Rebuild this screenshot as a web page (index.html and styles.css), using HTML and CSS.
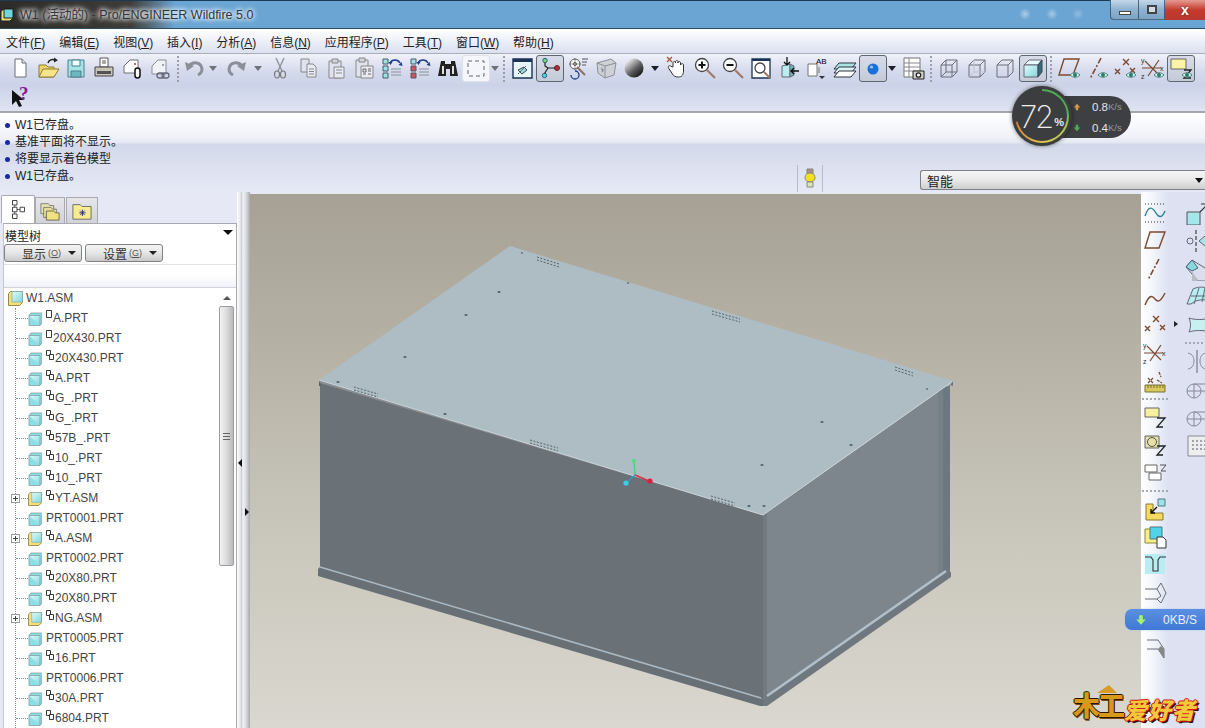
FILE: index.html
```html
<!DOCTYPE html>
<html lang="zh-CN">
<head>
<meta charset="utf-8">
<title>W1 (活动的) - Pro/ENGINEER Wildfire 5.0</title>
<link rel="stylesheet" href="styles.css">
</head>
<body>
<svg class="defs" width="0" height="0" aria-hidden="true">
  <defs>
    <linearGradient id="g-sphere" x1="0.2" y1="0.1" x2="0.9" y2="0.9"><stop offset="0" stop-color="#e8e8e8"/><stop offset="0.55" stop-color="#5c5c5c"/><stop offset="1" stop-color="#111"/></linearGradient>
    <linearGradient id="g-cube" x1="0" y1="0" x2="1" y2="1"><stop offset="0" stop-color="#e4fbfb"/><stop offset="1" stop-color="#7fd6dc"/></linearGradient>
    <symbol id="i-new" viewBox="0 0 24 24"><path d="M7 3h7l4 4v14H7z" fill="#fff" stroke="#6a6f78"/><path d="M14 3v4h4" fill="#e8e8ef" stroke="#6a6f78"/></symbol>
    <symbol id="i-open" viewBox="0 0 24 24"><path d="M3 9h7l2 2h6v10H3z" fill="#f2d465" stroke="#8e7a34"/><path d="M3 21l4-8h16l-5 8z" fill="#f8e488" stroke="#8e7a34"/><path d="M12 7c1-3 4-4 7-3" fill="none" stroke="#222" stroke-width="1.6"/><path d="M18 1.500l4 2.700-4 2.300z" fill="#222"/></symbol>
    <symbol id="i-save" viewBox="0 0 24 24"><path d="M4 4h16v17H4z" fill="#a4e4e6" stroke="#4f7f8c"/><path d="M8 4h8v6H8z" fill="#eaffff" stroke="#4f7f8c"/><path d="M7 15h10v6H7z" fill="#6db8c0" stroke="#4f7f8c"/></symbol>
    <symbol id="i-print" viewBox="0 0 24 24"><path d="M8 2h8v9H8z" fill="#fff" stroke="#555"/><path d="M10 5h4M10 7h4" stroke="#555"/><path d="M3 11h18v9H3z" fill="#c9c6b8" stroke="#444"/><path d="M5 15h14v3H5z" fill="#555"/></symbol>
    <symbol id="i-mail" viewBox="0 0 24 24"><path d="M4 10l6-6h8v13H4z" fill="#fff" stroke="#6a6f78"/><circle cx="15" cy="8" r="1" fill="#c33"/><rect x="15" y="12" width="5" height="10" rx="2.500" fill="#fff" stroke="#111" stroke-width="1.500"/></symbol>
    <symbol id="i-mail2" viewBox="0 0 24 24"><path d="M4 10l6-6h8v14H4z" fill="#f0f2f8" stroke="#8a8f98"/><circle cx="15" cy="9" r="1" fill="#889"/><rect x="9" y="17" width="7" height="5" rx="2.500" fill="none" stroke="#667" stroke-width="1.300"/><rect x="14" y="17" width="7" height="5" rx="2.500" fill="none" stroke="#667" stroke-width="1.300"/></symbol>
    <symbol id="i-undo" viewBox="0 0 24 24"><path d="M7 10c4-5 12-4 13 3 0 3-2 5-4 6" fill="none" stroke="#8a8f98" stroke-width="3"/><path d="M3 6l2 9 7-5z" fill="#8a8f98"/></symbol>
    <symbol id="i-redo" viewBox="0 0 24 24"><path d="M17 10c-4-5-12-4-13 3 0 3 2 5 4 6" fill="none" stroke="#8a8f98" stroke-width="3"/><path d="M21 6l-2 9-7-5z" fill="#8a8f98"/></symbol>
    <symbol id="i-cut" viewBox="0 0 24 24"><path d="M8 2l6 13M16 2l-6 13" stroke="#8a8f98" stroke-width="1.300" fill="none"/><ellipse cx="9" cy="18.500" rx="2.500" ry="3.500" fill="none" stroke="#777" stroke-width="1.200"/><ellipse cx="15" cy="18.500" rx="2.500" ry="3.500" fill="none" stroke="#777" stroke-width="1.200"/></symbol>
    <symbol id="i-copy" viewBox="0 0 24 24"><path d="M5 3h8v13H5z" fill="#dfe3f0" stroke="#888"/><path d="M11 8h6l3 3v10h-9z" fill="#e8ebf5" stroke="#888"/><path d="M13 13h5M13 15.500h5M13 18h5" stroke="#888"/></symbol>
    <symbol id="i-paste" viewBox="0 0 24 24"><path d="M5 5h12v17H5z" fill="#dfe3f0" stroke="#888"/><path d="M8 3h6v4H8z" fill="#d4d4dc" stroke="#888"/><path d="M10 11h10v11H10z" fill="#e8ebf5" stroke="#888"/><path d="M12 14h6M12 17h6" stroke="#888"/></symbol>
    <symbol id="i-paste2" viewBox="0 0 24 24"><path d="M4 4h12v17H4z" fill="#dfe3f0" stroke="#888"/><path d="M7 2h6v4H7z" fill="#d4d4dc" stroke="#888"/><path d="M9 10h12v12H9z" fill="#e8ebf5" stroke="#888"/><path d="M11 13h3v3h-3zM16 13h3M16 15h3M11 18h3M16 18h3" stroke="#666" fill="none"/></symbol>
    <symbol id="i-regen" viewBox="0 0 24 24"><path d="M3 3h5v5H3zM3 10h5v5H3zM3 17h5v5H3z" fill="#9be4e6" stroke="#4a5a68"/><path d="M11 13h10M11 16h10M11 19h10" stroke="#8a8f98"/><path d="M10 7c2-4 8-4 10 0" fill="none" stroke="#1d3f8a" stroke-width="1.600"/><path d="M8.500 6l4 0-2 3zM21.500 6l-3 3 4 1z" fill="#1d3f8a"/></symbol>
    <symbol id="i-regen2" viewBox="0 0 24 24"><path d="M3 3h5v5H3z" fill="#9be4e6" stroke="#4a5a68"/><path d="M3 10h5v5H3zM3 17h5v5H3z" fill="#d8505a" stroke="#4a5a68"/><path d="M11 13h10M11 16h10M11 19h10" stroke="#8a8f98"/><path d="M10 7c2-4 8-4 10 0" fill="none" stroke="#1d3f8a" stroke-width="1.600"/><path d="M8.500 6l4 0-2 3zM21.500 6l-3 3 4 1z" fill="#1d3f8a"/></symbol>
    <symbol id="i-binoc" viewBox="0 0 24 24"><path d="M5 5h4v3h6V5h4l3 15h-8v-7h-4v7H2z" fill="#222"/><path d="M6 10h2v8H6zM16 10h2v8h-2z" fill="#ddd"/></symbol>
    <symbol id="i-marquee" viewBox="0 0 24 24"><path d="M4 5h16v15H4z" fill="none" stroke="#666" stroke-dasharray="4 3"/></symbol>
    <symbol id="i-view" viewBox="0 0 24 24"><path d="M3 3h19v19H3z" fill="#e8f6fa" stroke="#1b3355" stroke-width="1.400"/><path d="M3 3h19v3H3z" fill="#1b3355"/><path d="M8 14l6-3 3 3-5 4z" fill="#9ad9df" stroke="#444"/><path d="M8 18l8-8" stroke="#444" stroke-dasharray="2 1"/></symbol>
    <symbol id="i-datum" viewBox="0 0 24 24"><circle cx="7" cy="4.500" r="2.200" fill="#7cd28a" stroke="#267"/><circle cx="6.500" cy="19.500" r="2.200" fill="#58d4e0" stroke="#267"/><circle cx="19" cy="12" r="2.500" fill="#b02a3a" stroke="#722"/><path d="M7 7v3l3 2-3.500 5.500M10 12h7" fill="none" stroke="#222" stroke-width="1.200"/></symbol>
    <symbol id="i-spin" viewBox="0 0 24 24"><circle cx="9" cy="8" r="5" fill="#fff" stroke="#555"/><circle cx="9" cy="8" r="1.500" fill="none" stroke="#555"/><path d="M3 8h12M9 2v12" stroke="#555" stroke-width="0.600"/><path d="M16 3h6M16 6h5M16 9h4" stroke="#556"/><path d="M11 11l8 8" stroke="#8a7060" stroke-width="2"/><path d="M5 19a4 4 0 1 0 4-4" fill="none" stroke="#1d3f8a" stroke-width="1.300"/></symbol>
    <symbol id="i-orient" viewBox="0 0 24 24"><path d="M3 7l14-4 5 4-2 12-9 3-7-5z" fill="#cfd1d6" stroke="#8a8f98"/><path d="M3 7l8 3 0 12M11 10l11-3" fill="none" stroke="#8a8f98"/><path d="M7 11l3 3-2 3z" fill="#8a8f98"/></symbol>
    <symbol id="i-sphere" viewBox="0 0 24 24"><circle cx="12" cy="12" r="9.500" fill="url(#g-sphere)"/></symbol>
    <symbol id="i-hand" viewBox="0 0 24 24"><path d="M8 11V7c0-2 2.500-2 2.500 0v-1c0-2 2.500-2 2.500 0v1c0-2 2.500-2 2.500 0v2c1-2 3-1.500 3 0v6c0 4-2 6-5 6s-5-1-6-3l-4-6c-1-2 1-3 2.500-1.500z" fill="#fff" stroke="#333"/><path d="M2 1l5 5M7 1L2 6" stroke="#a8563a" stroke-width="1.300"/></symbol>
    <symbol id="i-zoomin" viewBox="0 0 24 24"><circle cx="9" cy="9" r="6.500" fill="#fff" stroke="#444" stroke-width="1.300"/><path d="M5.500 9h7M9 5.500v7" stroke="#111" stroke-width="2"/><path d="M14 14l8 8" stroke="#a07868" stroke-width="2.200"/></symbol>
    <symbol id="i-zoomout" viewBox="0 0 24 24"><circle cx="9" cy="9" r="6.500" fill="#fff" stroke="#444" stroke-width="1.300"/><path d="M5.500 9h7" stroke="#111" stroke-width="2"/><path d="M14 14l8 8" stroke="#a07868" stroke-width="2.200"/></symbol>
    <symbol id="i-refit" viewBox="0 0 24 24"><path d="M3 3h18v19H3z" fill="#fff" stroke="#1b3355" stroke-width="1.300"/><path d="M3 3h18v2H3z" fill="#1b3355"/><circle cx="11" cy="12" r="5" fill="none" stroke="#444" stroke-width="1.300"/><path d="M15 16l6 6" stroke="#a07868" stroke-width="2"/></symbol>
    <symbol id="i-reorient" viewBox="0 0 24 24"><path d="M5 10l8-2v13H5z" fill="#b8ecee" stroke="#667"/><path d="M13 8l4 2v9l-4 2z" fill="#6ab8c0" stroke="#667"/><path d="M10 1v8M7 6l3 3 3-3M22 15h-8M17 12l-3 3 3 3" fill="none" stroke="#111" stroke-width="1.300"/></symbol>
    <symbol id="i-named" viewBox="0 0 24 24"><path d="M3 8h9v12H3z" fill="#fff" stroke="#777"/><text x="11" y="8" font-family="Liberation Sans,sans-serif" font-size="8">AB</text><path d="M14 11v6" stroke="#777"/><path d="M14 20l6 0-3 3z" fill="#333"/></symbol>
    <symbol id="i-layers" viewBox="0 0 24 24"><path d="M6 7h17l-5 6H1z" fill="#a8e4e0" stroke="#334"/><path d="M6 11h17l-5 6H1z" fill="#d8f4f0" stroke="#334"/><path d="M6 15h17l-5 6H1z" fill="#fff" stroke="#334"/></symbol>
    <symbol id="i-blue" viewBox="0 0 24 24"><circle cx="12" cy="13" r="5.500" fill="#1a6fd8"/><circle cx="10.500" cy="11" r="1.600" fill="#9cc8f8"/></symbol>
    <symbol id="i-table" viewBox="0 0 24 24"><path d="M3 2h16v19H3z" fill="#fff" stroke="#777"/><path d="M3 7h16M3 11h16M3 15h16M8 2v19" stroke="#888"/><path d="M12 15h11v8H12z" fill="#d0d0c8" stroke="#222"/><circle cx="17.500" cy="19" r="2.200" fill="#fff" stroke="#222" stroke-width="1.300"/></symbol>
    <symbol id="i-wire" viewBox="0 0 24 24"><path d="M4 9l5-5h11v12l-5 5H4z M4 9h11v12 M15 9l5-5 M4 21l5-5h11 M9 4v12" fill="none" stroke="#6a6f78"/></symbol>
    <symbol id="i-hidden" viewBox="0 0 24 24"><path d="M4 9l5-5h11v12l-5 5H4z M4 9h11v12 M15 9l5-5" fill="none" stroke="#6a6f78"/><path d="M4 21l5-5h11M9 4v12" fill="none" stroke="#c0c4cc"/></symbol>
    <symbol id="i-nohidden" viewBox="0 0 24 24"><path d="M4 9l5-5h11v12l-5 5H4z M4 9h11v12 M15 9l5-5" fill="none" stroke="#6a6f78"/></symbol>
    <symbol id="i-shaded" viewBox="0 0 24 24"><path d="M3 9l5-5h13l-4 5z" fill="#e8fbfb" stroke="#667"/><path d="M3 9h14v12H3z" fill="url(#g-cube)" stroke="#667"/><path d="M17 9l4-5v12l-4 5z" fill="#2f6d78" stroke="#445"/></symbol>
    <symbol id="i-plane" viewBox="0 0 24 24"><path d="M7 3h15l-6 16H2z" fill="none" stroke="#7b4a30" stroke-width="1.400"/></symbol>
    <symbol id="i-axis" viewBox="0 0 24 24"><path d="M16 2L5 23" fill="none" stroke="#7b4a30" stroke-width="1.600" stroke-dasharray="6 2 2 2"/></symbol>
    <symbol id="i-points" viewBox="0 0 24 24"><path d="M10 3l6 6M16 3l-6 6M2 13l5 5M7 13l-5 5M17 12l5 5M22 12l-5 5" stroke="#7b4a30" stroke-width="1.400"/></symbol>
    <symbol id="i-csys" viewBox="0 0 24 24"><path d="M4 5l14 14M18 4L7 20M1 12h19" stroke="#7b4a30" stroke-width="1.200"/><text x="0" y="7" font-family="Liberation Sans,sans-serif" font-size="7" fill="#333">y</text><text x="0" y="23" font-family="Liberation Sans,sans-serif" font-size="7" fill="#333">z</text><text x="19" y="15" font-family="Liberation Sans,sans-serif" font-size="7" fill="#333">x</text></symbol>
    <symbol id="i-eye" viewBox="0 0 24 24"><path d="M13 19c3-3 7-3 10 0-3 3-7 3-10 0z" fill="#cfe"  stroke="#4f7f7a"/><circle cx="18" cy="19" r="2" fill="#2a7a72"/></symbol>
    <symbol id="i-annot" viewBox="0 0 24 24"><path d="M2 3h15v10H2z" fill="#fbf3a6" stroke="#666"/><path d="M15 14h7l-7 8h7" fill="none" stroke="#222" stroke-width="1.300"/><path d="M13 19c3-3 7-3 10 0-3 3-7 3-10 0z" fill="#cfe" stroke="#4f7f7a"/><circle cx="18" cy="19" r="2" fill="#2a7a72"/></symbol>
    <symbol id="i-sketch" viewBox="0 0 24 24"><path d="M2 3h20M2 21h20" stroke="#333" stroke-dasharray="1 2"/><path d="M2 15c4-12 8-8 11-3s6 5 9-2" fill="none" stroke="#2a7f9a" stroke-width="1.400"/></symbol>
    <symbol id="i-curve" viewBox="0 0 24 24"><path d="M2 20c4-10 7-10 10-6s6 2 10-6" fill="none" stroke="#7b4a30" stroke-width="1.400"/></symbol>
    <symbol id="i-analysis" viewBox="0 0 24 24"><path d="M5 9l5 5M10 9l-5 5M16 3l2 5M14 11l5 3" stroke="#7b4a30" stroke-width="1.300" stroke-dasharray="3 1"/><path d="M2 16h20v7H2z" fill="#d8c860" stroke="#7a7030"/><path d="M5 16v3M8 16v3M11 16v3M14 16v3M17 16v3M20 16v3" stroke="#7a7030"/></symbol>
    <symbol id="i-note" viewBox="0 0 24 24"><path d="M2 3h14v9H2z" fill="#f6f0a0" stroke="#666"/><path d="M14 13h8l-8 9h6" fill="none" stroke="#222" stroke-width="1.300"/></symbol>
    <symbol id="i-note2" viewBox="0 0 24 24"><path d="M2 3h14v12H2z" fill="#e4e0a8" stroke="#666"/><circle cx="9" cy="9" r="4.500" fill="none" stroke="#555"/><path d="M14 13h8l-8 9h6" fill="none" stroke="#222" stroke-width="1.300"/></symbol>
    <symbol id="i-note3" viewBox="0 0 24 24"><path d="M2 4h12v7H2zM6 12h12v7H6z" fill="#fff" stroke="#666"/><path d="M17 4h6l-5 6h5" fill="none" stroke="#555"/></symbol>
    <symbol id="i-asm" viewBox="0 0 24 24"><path d="M3 7h7v9h10v7H3z" fill="#f6d95e" stroke="#8a7a30"/><path d="M15 2h7v7h-7z" fill="#9ee4e6" stroke="#4a7a80"/><path d="M14 10l-6 6M8 12v4h4" fill="none" stroke="#111" stroke-width="1.400"/></symbol>
    <symbol id="i-asm2" viewBox="0 0 24 24"><path d="M2 4h14v14H2z" fill="#f6ee88" stroke="#8a8a30"/><path d="M7 2h12v12H7z" fill="#4fd4ea" stroke="#4a7a80"/><path d="M14 12h6l3 3v8h-9z" fill="#fff" stroke="#333"/></symbol>
    <symbol id="i-t" viewBox="0 0 24 24"><path d="M2 1h20v20H2z" fill="#b8eef2" stroke="none"/><path d="M2 4h6l2 3v11h5V7l2-3h6" fill="none" stroke="#333" stroke-width="1.100"/></symbol>
    <symbol id="i-bend" viewBox="0 0 24 24"><path d="M2 8h12l4-6 5 10-5 10-4-4H2M14 8l4 7-4 3" fill="none" stroke="#6a6f78"/></symbol>
    <symbol id="i-fold" viewBox="0 0 24 24"><path d="M4 3h11l6 9v9l-6-9H4" fill="none" stroke="#6a6f78"/><path d="M15 12l6 9 0-9-3-3z" fill="#888"/></symbol>
    <symbol id="i-extrude" viewBox="0 0 24 24"><path d="M2 11h13v13H2z" fill="#a4e6ea" stroke="#555"/><path d="M15 11l8-8" stroke="#333" stroke-width="1.200"/><path d="M16 3h8" stroke="#333"/></symbol>
    <symbol id="i-revolve" viewBox="0 0 24 24"><circle cx="5" cy="12" r="3" fill="none" stroke="#667"/><path d="M11 1v23" stroke="#222" stroke-dasharray="4 2"/><path d="M14 12l6-5 5 5-5 5z" fill="#a4e6ea" stroke="#667"/></symbol>
    <symbol id="i-sweep" viewBox="0 0 24 24"><path d="M1 10l6-7 18 11v10H13z" fill="#dde" stroke="#667"/><path d="M1 10l6-7 6 8-6 3z" fill="#8ad8dc" stroke="#467"/><path d="M7 14l6 10h-6z" fill="#b8bcc4"/></symbol>
    <symbol id="i-surf" viewBox="0 0 24 24"><path d="M8 4c6-3 12-2 17 0v12c-6-2-13-2-19 3H2z" fill="#b8eef0" stroke="#667"/><path d="M14 3l-5 16M20 3l-3 14M6 11h18" stroke="#667" fill="none"/></symbol>
    <symbol id="i-boundary" viewBox="0 0 24 24"><path d="M4 5c6 2 14 2 22 0v14c-8-2-16-2-22 0 2-5 2-9 0-14z" fill="#c8f0f0" stroke="#667"/></symbol>
    <symbol id="i-mirror" viewBox="0 0 24 24"><path d="M12 1v23" stroke="#667"/><path d="M3 4c5 1 6 5 6 8s-1 7-6 8M21 4c-5 1-6 5-6 8s1 7 6 8" fill="none" stroke="#889"/></symbol>
    <symbol id="i-round" viewBox="0 0 24 24"><circle cx="9" cy="14" r="7" fill="none" stroke="#889"/><path d="M9 7v14M2 14h22M9 7h15" stroke="#889" fill="none"/></symbol>
    <symbol id="i-pattern" viewBox="0 0 24 24"><path d="M3 3h22v20H3z" fill="#eee" stroke="#889"/><path d="M7 8h13M7 12h13M7 16h13" stroke="#556" stroke-dasharray="2 2"/></symbol>
    <symbol id="i-part" viewBox="0 0 14 14"><path d="M1 3.500l2-2.500h11v10l-2 2.500H1z" fill="#8adfe4" stroke="#83a0a6" stroke-width="0.800"/><path d="M1 3.500h11v10" fill="url(#g-cube)" stroke="#83a0a6" stroke-width="0.800"/></symbol>
    <symbol id="i-asmtree" viewBox="0 0 15 15"><path d="M.5 2.500l2-2h12v11l-3 3H.5z" fill="#f6df78" stroke="#8e8a4a"/><path d="M4 .5h10.500v10.500H4z" fill="url(#g-cube)" stroke="#7fa8aa" stroke-width="0.700"/></symbol>
    <symbol id="i-mark" viewBox="0 0 7 9"><path d="M.5.500h5v7h-5z" fill="#fff" stroke="#222" stroke-width="0.900"/></symbol>
    <symbol id="i-mark2" viewBox="0 0 8 10"><path d="M.5.500h4v5h-4z" fill="#fff" stroke="#222" stroke-width="0.900"/><path d="M3.500 4.500h4v5h-4z" fill="#fff" stroke="#222" stroke-width="0.900"/></symbol>
    <symbol id="i-tab1" viewBox="0 0 20 26"><path d="M2 1h6v6H2zM2 10h6v6H2zM2 19h6v6H2zM12 10h6v6h-6z" fill="#fff" stroke="#333" stroke-width="1.200"/><path d="M5 7v3M5 16v3M8 13h4" stroke="#333"/></symbol>
    <symbol id="i-tab2" viewBox="0 0 22 22"><path d="M1 3h8l2 2h4v9H1z" fill="#e8e6b0" stroke="#777"/><path d="M4 7h8l2 2h4v9H4z" fill="#e8e090" stroke="#777"/><path d="M7 11h8l2 2h4v8H7z" fill="#f0e280" stroke="#665"/></symbol>
    <symbol id="i-tab3" viewBox="0 0 22 20"><path d="M1 3h8l2 2h10v14H1z" fill="#f6ec90" stroke="#666"/><path d="M8 12h7M11.500 8.500v7M9 9.500l5 5M14 9.500l-5 5" stroke="#2b2f90"/></symbol>
    <symbol id="i-help" viewBox="0 0 24 24"><path d="M2 5v15l4-4 3 6 3-1-3-6h5z" fill="#111"/><text x="9" y="15" font-family="Liberation Serif,serif" font-size="19" font-weight="700" fill="#8a1a8a">?</text></symbol>
    <symbol id="i-light" viewBox="0 0 14 24"><path d="M4 2h6v5H4z" fill="#a89088" stroke="#887"/><path d="M7 6c4 0 5 3 5 5s-2 4-5 4-5-2-5-4 1-5 5-5z" fill="#f0e020" stroke="#887"/><path d="M4 15h6v5H4z" fill="#d8e8b8" stroke="#887"/></symbol>
    <symbol id="i-win" viewBox="0 0 14 14"><path d="M1 3l3-2h9v9l-3 3H1z" fill="#e8e070" stroke="#222"/><path d="M4 1h9v9H4z" fill="#6ed8dc" stroke="#222"/></symbol>
    <symbol id="i-arrow-up" viewBox="0 0 10 10"><path d="M5 1l4 4.500H6.500V9h-3V5.500H1z"/></symbol>
    <symbol id="i-arrow-down" viewBox="0 0 10 10"><path d="M5 9L1 4.500h2.500V1h3v3.500H9z"/></symbol>
  </defs>
</svg>

<div class="app">
  <header class="titlebar">
    <svg class="title-icon"><use href="#i-win"/></svg>
    <span class="title-text">W1 (活动的) - Pro/ENGINEER Wildfire 5.0</span>
    <div class="winctl">
      <span class="winbtn winbtn-min"><i class="glyph-min"></i></span>
      <span class="winbtn winbtn-max"><i class="glyph-max"></i></span>
      <span class="winbtn winbtn-close">x</span>
    </div>
  </header>

  <nav class="menubar">
    <span class="menu">文件(<u>F</u>)</span>
    <span class="menu">编辑(<u>E</u>)</span>
    <span class="menu">视图(<u>V</u>)</span>
    <span class="menu">插入(<u>I</u>)</span>
    <span class="menu">分析(<u>A</u>)</span>
    <span class="menu">信息(<u>N</u>)</span>
    <span class="menu">应用程序(<u>P</u>)</span>
    <span class="menu">工具(<u>T</u>)</span>
    <span class="menu">窗口(<u>W</u>)</span>
    <span class="menu">帮助(<u>H</u>)</span>
  </nav>

  <section class="toolbar">
    <div class="tb-row">
      <span class="tb"><svg><use href="#i-new"/></svg></span>
      <span class="tb"><svg><use href="#i-open"/></svg></span>
      <span class="tb"><svg><use href="#i-save"/></svg></span>
      <span class="tb"><svg><use href="#i-print"/></svg></span>
      <span class="tb"><svg><use href="#i-mail"/></svg></span>
      <span class="tb"><svg><use href="#i-mail2"/></svg></span>
      <span class="tb-sep"></span>
      <span class="tb tb-narrow"><svg><use href="#i-undo"/></svg></span>
      <span class="tb-dd tb-dd-wide dim"></span>
      <span class="tb"><svg><use href="#i-redo"/></svg></span>
      <span class="tb-dd dim"></span>
      <span class="tb"><svg><use href="#i-cut"/></svg></span>
      <span class="tb"><svg><use href="#i-copy"/></svg></span>
      <span class="tb"><svg><use href="#i-paste"/></svg></span>
      <span class="tb"><svg><use href="#i-paste2"/></svg></span>
      <span class="tb"><svg><use href="#i-regen"/></svg></span>
      <span class="tb"><svg><use href="#i-regen2"/></svg></span>
      <span class="tb"><svg><use href="#i-binoc"/></svg></span>
      <span class="tb tb-white"><svg><use href="#i-marquee"/></svg></span>
      <span class="tb-dd tb-dd-small dim"></span>
      <span class="tb-sep"></span>
      <span class="tb"><svg><use href="#i-view"/></svg></span>
      <span class="tb tb-on"><svg><use href="#i-datum"/></svg></span>
      <span class="tb"><svg><use href="#i-spin"/></svg></span>
      <span class="tb"><svg><use href="#i-orient"/></svg></span>
      <span class="tb"><svg><use href="#i-sphere"/></svg></span>
      <span class="tb-dd"></span>
      <span class="tb"><svg><use href="#i-hand"/></svg></span>
      <span class="tb"><svg><use href="#i-zoomin"/></svg></span>
      <span class="tb"><svg><use href="#i-zoomout"/></svg></span>
      <span class="tb"><svg><use href="#i-refit"/></svg></span>
      <span class="tb"><svg><use href="#i-reorient"/></svg></span>
      <span class="tb"><svg><use href="#i-named"/></svg></span>
      <span class="tb"><svg><use href="#i-layers"/></svg></span>
      <span class="tb tb-on"><svg><use href="#i-blue"/></svg></span>
      <span class="tb-dd tb-dd-mid"></span>
      <span class="tb"><svg><use href="#i-table"/></svg></span>
      <span class="tb-sep"></span>
      <span class="tb"><svg><use href="#i-wire"/></svg></span>
      <span class="tb"><svg><use href="#i-hidden"/></svg></span>
      <span class="tb"><svg><use href="#i-nohidden"/></svg></span>
      <span class="tb tb-on"><svg><use href="#i-shaded"/></svg></span>
      <span class="tb-sep"></span>
      <span class="tb tb-stack"><svg><use href="#i-plane"/></svg><svg class="eye"><use href="#i-eye"/></svg></span>
      <span class="tb tb-stack"><svg><use href="#i-axis"/></svg><svg class="eye"><use href="#i-eye"/></svg></span>
      <span class="tb tb-stack"><svg><use href="#i-points"/></svg><svg class="eye"><use href="#i-eye"/></svg></span>
      <span class="tb tb-stack"><svg><use href="#i-csys"/></svg><svg class="eye"><use href="#i-eye"/></svg></span>
      <span class="tb tb-on"><svg><use href="#i-annot"/></svg></span>
    </div>
    <div class="tb-row tb-row-2">
      <span class="tb"><svg><use href="#i-help"/></svg></span>
    </div>
  </section>

  <section class="messages">
    <ul class="msg-list">
      <li>W1已存盘。</li>
      <li>基准平面将不显示。</li>
      <li>将要显示着色模型</li>
      <li>W1已存盘。</li>
    </ul>
    <div class="status-light"><svg><use href="#i-light"/></svg></div>
    <div class="combo"><span>智能</span><i class="combo-arrow"></i></div>
  </section>

  <main class="workspace">
    <aside class="navigator">
      <div class="tabs">
        <span class="tab tab-on"><svg class="tab-i1"><use href="#i-tab1"/></svg></span>
        <span class="tab tab-2"><svg class="tab-i2"><use href="#i-tab2"/></svg></span>
        <span class="tab tab-3"><svg class="tab-i2"><use href="#i-tab3"/></svg></span>
      </div>
      <div class="nav-panel">
        <div class="nav-head"><span>模型树</span><i class="nav-arrow"></i></div>
        <div class="nav-buttons">
          <span class="nav-btn">显示 <small>(<u>O</u>)</small><i class="btn-arrow"></i></span>
          <span class="nav-btn nav-btn-2">设置 <small>(<u>G</u>)</small><i class="btn-arrow"></i></span>
        </div>
        <div class="filter"></div>
        <div class="tree-wrap">
          <ul class="tree">
            <li class="row row-root"><svg class="ic-asm"><use href="#i-asmtree"/></svg>W1.ASM</li>
            <li class="row"><svg class="ic"><use href="#i-part"/></svg><svg class="mk"><use href="#i-mark"/></svg>A.PRT</li>
            <li class="row"><svg class="ic"><use href="#i-part"/></svg><svg class="mk"><use href="#i-mark"/></svg>20X430.PRT</li>
            <li class="row"><svg class="ic"><use href="#i-part"/></svg><svg class="mk2"><use href="#i-mark2"/></svg>20X430.PRT</li>
            <li class="row"><svg class="ic"><use href="#i-part"/></svg><svg class="mk2"><use href="#i-mark2"/></svg>A.PRT</li>
            <li class="row"><svg class="ic"><use href="#i-part"/></svg><svg class="mk2"><use href="#i-mark2"/></svg>G_.PRT</li>
            <li class="row"><svg class="ic"><use href="#i-part"/></svg><svg class="mk2"><use href="#i-mark2"/></svg>G_.PRT</li>
            <li class="row"><svg class="ic"><use href="#i-part"/></svg><svg class="mk2"><use href="#i-mark2"/></svg>57B_.PRT</li>
            <li class="row"><svg class="ic"><use href="#i-part"/></svg><svg class="mk2"><use href="#i-mark2"/></svg>10_.PRT</li>
            <li class="row"><svg class="ic"><use href="#i-part"/></svg><svg class="mk2"><use href="#i-mark2"/></svg>10_.PRT</li>
            <li class="row row-exp"><i class="plus"></i><svg class="ic"><use href="#i-asmtree"/></svg><svg class="mk2"><use href="#i-mark2"/></svg>YT.ASM</li>
            <li class="row"><svg class="ic"><use href="#i-part"/></svg><span class="nomark">PRT0001.PRT</span></li>
            <li class="row row-exp"><i class="plus"></i><svg class="ic"><use href="#i-asmtree"/></svg><svg class="mk2"><use href="#i-mark2"/></svg>A.ASM</li>
            <li class="row"><svg class="ic"><use href="#i-part"/></svg><span class="nomark">PRT0002.PRT</span></li>
            <li class="row"><svg class="ic"><use href="#i-part"/></svg><svg class="mk2"><use href="#i-mark2"/></svg>20X80.PRT</li>
            <li class="row"><svg class="ic"><use href="#i-part"/></svg><svg class="mk2"><use href="#i-mark2"/></svg>20X80.PRT</li>
            <li class="row row-exp"><i class="plus"></i><svg class="ic"><use href="#i-asmtree"/></svg><svg class="mk2"><use href="#i-mark2"/></svg>NG.ASM</li>
            <li class="row"><svg class="ic"><use href="#i-part"/></svg><span class="nomark">PRT0005.PRT</span></li>
            <li class="row"><svg class="ic"><use href="#i-part"/></svg><svg class="mk2"><use href="#i-mark2"/></svg>16.PRT</li>
            <li class="row"><svg class="ic"><use href="#i-part"/></svg><span class="nomark">PRT0006.PRT</span></li>
            <li class="row"><svg class="ic"><use href="#i-part"/></svg><svg class="mk2"><use href="#i-mark2"/></svg>30A.PRT</li>
            <li class="row"><svg class="ic"><use href="#i-part"/></svg><svg class="mk2"><use href="#i-mark2"/></svg>6804.PRT</li>
          </ul>
          <div class="scrollbar">
            <i class="sb-up"></i>
            <div class="sb-thumb"><i class="sb-grip"></i></div>
          </div>
        </div>
      </div>
    </aside>

    <div class="sash">
      <i class="sash-tri sash-left"></i>
      <i class="sash-tri sash-right"></i>
    </div>

    <div class="canvas">
      <svg class="scene" viewBox="250 194 891 534">
        <polygon points="319,380 321,386 763,518 763,515" fill="#8a8f92"/>
        <polygon points="320,383 763,515 763,699 320,567" fill="#6a7177"/>
        <polygon points="763,515 947,386 947,571 763,699" fill="#7d868c"/>
        <polygon points="763,515 767,513 767,697 763,699" fill="#737b81"/>
        <polygon points="938,392 947,386 947,571 938,577" fill="#768087"/>
        <polygon points="943,389 950,385 950,570 943,574" fill="#6d7780"/>
        <polygon points="318,569 320,567 763,699 763,706 760,706 318,576" fill="#687076"/>
        <polygon points="763,699 949,569 951,573 951,577 767,706 763,706" fill="#6f787e"/>
        <line x1="320" y1="567" x2="761" y2="698" stroke="#a9b8c2" stroke-width="1.500"/>
        <line x1="767" y1="696" x2="946" y2="571" stroke="#b0c0cc" stroke-width="2.500"/>
        <polygon points="510,246 953,381 763,515 319,380" fill="#aebcc4"/>
        <polyline points="319,380 763,515 953,381" fill="none" stroke="#c8d2d8" stroke-width="1"/>
        <polygon points="319,380 319,386 321,386" fill="#6f5d50"/>
        <polygon points="953,381 953,386 950,385" fill="#6d7780"/>
        <g class="dots" fill="#56616a">
          <ellipse cx="499" cy="292" rx="1.600" ry="1"/><ellipse cx="466" cy="315" rx="1.600" ry="1"/>
          <ellipse cx="405" cy="357" rx="1.600" ry="1"/><ellipse cx="338" cy="382" rx="1.600" ry="1"/>
          <ellipse cx="445" cy="414" rx="1.600" ry="1"/><ellipse cx="522" cy="253" rx="1.200" ry=".8"/>
          <ellipse cx="628" cy="283" rx="1.200" ry=".8"/><ellipse cx="822" cy="422" rx="1.600" ry="1"/>
          <ellipse cx="851" cy="445" rx="1.600" ry="1"/><ellipse cx="762" cy="465" rx="1.600" ry="1"/>
          <ellipse cx="749" cy="506" rx="1.600" ry="1"/><ellipse cx="764" cy="506" rx="1.600" ry="1"/>
          <ellipse cx="927" cy="389" rx="1.200" ry=".8"/>
        </g>
        <g class="vents" stroke="#59646c" stroke-width="1" stroke-dasharray="2 1.500" fill="none">
          <path d="M537 257l22 7M537 260l22 7"/>
          <path d="M354 387l24 7M354 390l24 7"/>
          <path d="M530 440l28 8M530 443l28 8"/>
          <path d="M712 311l28 8M712 314l28 8"/>
          <path d="M711 496l24 7M711 499l24 7"/>
          <path d="M895 367l18 6M895 370l18 6"/>
        </g>
        <g class="triad">
          <line x1="635" y1="475" x2="634" y2="461" stroke="#4fd07a" stroke-width="1.500"/>
          <circle cx="634" cy="461" r="2.200" fill="#5fd88a"/>
          <line x1="635" y1="475" x2="649" y2="481" stroke="#d8304a" stroke-width="1.500"/>
          <circle cx="650" cy="481" r="2.600" fill="#d82040"/>
          <line x1="635" y1="475" x2="626" y2="483" stroke="#3a9ab8" stroke-width="1.500"/>
          <circle cx="626" cy="483" r="2.600" fill="#38d0e8"/>
        </g>
      </svg>
    </div>

    <aside class="featurebar">
      <div class="fb-col fb-col-1">
        <span class="fb"><svg><use href="#i-sketch"/></svg></span>
        <span class="fb"><svg><use href="#i-plane"/></svg></span>
        <span class="fb"><svg><use href="#i-axis"/></svg></span>
        <span class="fb"><svg><use href="#i-curve"/></svg></span>
        <span class="fb"><svg><use href="#i-points"/></svg></span>
        <span class="fb"><svg><use href="#i-csys"/></svg></span>
        <span class="fb"><svg><use href="#i-analysis"/></svg></span>
        <span class="fb-sep"></span>
        <span class="fb"><svg><use href="#i-note"/></svg></span>
        <span class="fb"><svg><use href="#i-note2"/></svg></span>
        <span class="fb"><svg><use href="#i-note3"/></svg></span>
        <span class="fb-sep"></span>
        <span class="fb"><svg><use href="#i-asm"/></svg></span>
        <span class="fb"><svg><use href="#i-asm2"/></svg></span>
        <span class="fb"><svg><use href="#i-t"/></svg></span>
        <span class="fb"><svg><use href="#i-bend"/></svg></span>
        <span class="fb"></span>
        <span class="fb"><svg><use href="#i-fold"/></svg></span>
      </div>
      <div class="fb-col fb-col-2">
        <span class="fb"><svg><use href="#i-extrude"/></svg></span>
        <span class="fb"><svg><use href="#i-revolve"/></svg></span>
        <span class="fb"><svg><use href="#i-sweep"/></svg></span>
        <span class="fb"><svg><use href="#i-surf"/></svg></span>
        <span class="fb fb-flyout"><svg><use href="#i-boundary"/></svg></span>
        <span class="fb-sep"></span>
        <span class="fb"><svg><use href="#i-mirror"/></svg></span>
        <span class="fb"><svg><use href="#i-round"/></svg></span>
        <span class="fb"><svg><use href="#i-round"/></svg></span>
        <span class="fb"><svg><use href="#i-pattern"/></svg></span>
      </div>
    </aside>
  </main>

  <div class="meter">
    <div class="meter-dial"><span class="meter-num">72</span><span class="meter-pct">%</span></div>
    <div class="meter-rates">
      <div class="rate"><svg class="rate-up"><use href="#i-arrow-up"/></svg><b>0.8</b><small>K/s</small></div>
      <div class="rate"><svg class="rate-down"><use href="#i-arrow-down"/></svg><b>0.4</b><small>K/s</small></div>
    </div>
  </div>

  <div class="speed-pill"><svg><use href="#i-arrow-down"/></svg><span>0KB/S</span></div>

  <div class="logo"><span class="logo-a">木工</span><span class="logo-b">爱好者</span></div>
</div>
</body>
</html>
```

FILE: styles.css
```css
* { box-sizing: border-box; }
html, body { margin: 0; padding: 0; }
body {
  width: 1205px;
  height: 728px;
  overflow: hidden;
  font-family: "Liberation Sans", "Noto Sans CJK SC", sans-serif;
  font-size: 12px;
  color: #222;
}
ul { list-style: none; margin: 0; padding: 0; }
i { font-style: normal; display: block; }
.defs { position: absolute; }

.app {
  position: relative;
  width: 1205px;
  height: 728px;
  display: flex;
  flex-direction: column;
  overflow: hidden;
  background: #dfe3f1;
}

/* title bar */
.titlebar {
  height: 29px;
  flex: none;
  display: flex;
  align-items: center;
  border-top: 1px solid #1b3a55;
  border-bottom: 1px solid #2d4a5e;
  background:
    radial-gradient(circle at 1025px 13px, rgba(255,255,255,.45) 0, rgba(255,255,255,0) 6px),
    radial-gradient(circle at 1052px 13px, rgba(255,255,255,.4) 0, rgba(255,255,255,0) 6px),
    radial-gradient(circle at 1078px 13px, rgba(255,255,255,.25) 0, rgba(255,255,255,0) 6px),
    linear-gradient(90deg, #2c2b28 0, #3d3c38 130px, #5e7f98 160px, #6aa5d4 175px, #6aa5d4 100%);
}
.title-icon { width: 14px; height: 14px; margin-left: 0; flex: none; }
.title-text {
  margin-left: 6px;
  margin-top: -2px;
  font-size: 12.500px;
  color: #33363a;
  white-space: nowrap;
  text-shadow: 0 0 5px #fff, 0 0 5px #fff, 0 0 7px rgba(255,255,255,.8);
}
.winctl { margin-left: auto; align-self: flex-start; display: flex; height: 20px; margin-top: -1px; }
.winbtn {
  height: 20px;
  display: flex;
  align-items: center;
  justify-content: center;
  border: 1px solid rgba(40,60,80,.7);
  border-top: none;
  background: linear-gradient(#c4d8ea, #8fb2d0 50%, #7ca3c5);
}
.winbtn-min { width: 29px; border-radius: 0 0 0 4px; }
.winbtn-max { width: 26px; border-left: none; }
.winbtn-close {
  width: 40px;
  border: none;
  background: linear-gradient(#e49a90, #c63a2e 50%, #b8382e);
  color: #fff;
  font-size: 14px;
  font-weight: 700;
  text-shadow: 0 0 2px #333;
}
.glyph-min { width: 12px; height: 4px; background: #fff; border: 1px solid #444; margin-top: 6px; }
.glyph-max { width: 10px; height: 9px; border: 2px solid #444; background: #cfdde8; }

/* menu */
.menubar {
  height: 25px;
  flex: none;
  display: flex;
  align-items: center;
  gap: 13.900px;
  padding: 0 0 0 6px;
  background: linear-gradient(#fff 0, #f4f6fb 30%, #dbe0ef 100%);
  border-bottom: 1px solid #a9aeb9;
}
.menu { color: #222; white-space: nowrap; }

/* toolbar */
.toolbar {
  height: 59px;
  flex: none;
  padding-left: 6px;
  background: linear-gradient(#f0f2fa 0, #d5daec 30%, #ccd3e8 55%, #dfe3f2 100%);
  border-bottom: 2px solid #a3a6ad;
  background-clip: padding-box;
}
.tb-row { display: flex; align-items: center; height: 28px; }
.tb-row-2 { height: 29px; padding-left: 2px; }
.tb {
  position: relative;
  width: 28px;
  height: 27px;
  flex: none;
  display: flex;
  align-items: center;
  justify-content: center;
}
.tb svg { width: 24px; height: 24px; }
.tb-narrow { width: 24px; }
.tb-on, .tb-white { border: 1px solid #5c6772; border-radius: 3px; background: linear-gradient(#d8dce8, #c4cad8); }
.tb-white { border-color: #e0e2e8; background: #f4f6fb; width: 28px; }
.tb-stack .eye { position: absolute; left: 2px; top: 1px; }
.tb-dd { width: 15px; flex: none; position: relative; height: 10px; }
.tb-dd::after {
  content: "";
  position: absolute;
  left: 3px;
  top: 3px;
  border: 4px solid transparent;
  border-top: 5px solid #1c2028;
  border-bottom: 0;
}
.tb-dd.dim::after { border-top-color: #6e737c; }
.tb-dd-wide { width: 17px; }
.tb-dd-small { width: 10px; }
.tb-dd-mid { width: 12px; }
.tb-dd-small::after, .tb-dd-mid::after { left: 1px; }
.tb-sep {
  width: 8px;
  height: 27px;
  flex: none;
  margin: 0;
  background: radial-gradient(circle, #9a9ea8 1px, transparent 1.200px) center top / 8px 4px repeat-y;
}

/* messages */
.messages {
  position: relative;
  height: 79px;
  flex: none;
  background: linear-gradient(#fff 0, #f0f2f8 30%, #e6e9f3 37%, #d3d9ea 40%, #dde1f0 70%, #e6e9f5 100%);
  padding-top: 4px;
}
.msg-list li {
  position: relative;
  height: 17px;
  line-height: 17px;
  padding-left: 15px;
}
.msg-list li::before {
  content: "";
  position: absolute;
  left: 4.500px;
  top: 6px;
  width: 5px;
  height: 5px;
  border-radius: 50%;
  background: #1a2a9c;
}
.status-light {
  position: absolute;
  left: 797px;
  top: 52px;
  width: 26px;
  height: 27px;
  border-left: 1px solid #b8bcc8;
  border-right: 1px solid #b8bcc8;
  display: flex;
  align-items: center;
  justify-content: center;
}
.status-light svg { width: 14px; height: 24px; }
.combo {
  position: absolute;
  left: 920px;
  top: 57px;
  width: 285px;
  height: 20px;
  padding-left: 6px;
  display: flex;
  align-items: center;
  font-size: 13px;
  border: 1px solid #7c8088;
  border-right: none;
  border-radius: 3px 0 0 3px;
  background: linear-gradient(#f6f6f6, #e8e8e8 50%, #cfcfcf);
}
.combo-arrow {
  margin-left: auto;
  margin-right: 2px;
  border: 4px solid transparent;
  border-top: 5px solid #111;
  border-bottom: 0;
}

/* workspace */
.workspace {
  flex: 1;
  min-height: 0;
  display: flex;
  background: #e6e9f5;
}
.navigator { width: 237px; flex: none; display: flex; flex-direction: column; padding-top: 2px; }
.tabs { height: 29px; flex: none; display: flex; align-items: flex-end; padding-left: 1px; }
.tab {
  height: 26px;
  width: 30px;
  display: flex;
  align-items: center;
  justify-content: center;
  border: 1px solid #a8aab0;
  border-bottom: none;
  background: linear-gradient(#e6e6ea, #d2d3d8);
}
.tab-on { width: 34px; height: 28px; background: #fff; border-radius: 2px 2px 0 0; }
.tab-3 { width: 32px; margin-left: 1px; }
.tab-i1 { width: 15px; height: 21px; }
.tab-i2 { width: 20px; height: 20px; }
.nav-panel {
  flex: 1;
  min-height: 0;
  margin-left: 3px;
  background: #fff;
  border-top: 1px solid #a8aab0;
  border-left: 1px solid #c4c6cc;
  border-right: 1px solid #a8aab0;
  display: flex;
  flex-direction: column;
}
.nav-head {
  height: 20px;
  display: flex;
  align-items: center;
  justify-content: space-between;
  padding: 2px 3px 0 1px;
}
.nav-arrow { margin-bottom: 6px; border: 5px solid transparent; border-top: 5px solid #111; border-bottom: 0; }
.nav-buttons { display: flex; gap: 3px; height: 20px; flex: none; }
.nav-btn {
  position: relative;
  width: 78px;
  height: 18px;
  display: flex;
  align-items: center;
  padding-left: 17px;
  gap: 2px;
  color: #333;
  border: 1px solid #7f8388;
  border-radius: 3px;
  background: linear-gradient(#f4f4f4, #e6e6e6 50%, #c9c9c9);
  white-space: nowrap;
}
.nav-btn small { font-size: 9px; color: #555; }
.btn-arrow {
  margin-left: 5px;
  border: 4px solid transparent;
  border-top: 4px solid #222;
  border-bottom: 0;
}
.nav-btn-2 { padding-left: 17px; }
.filter {
  height: 24px;
  flex: none;
  border-top: 1px solid #e4e4e8;
  border-bottom: 1px solid #cfd2d8;
  background: linear-gradient(#fff 40%, #f0f3f8);
}
.tree-wrap { flex: 1; min-height: 0; display: flex; overflow: hidden; }
.tree {
  position: relative;
  flex: 1;
  min-width: 0;
  font-size: 12px;
  color: #444;
}
.tree::before {
  content: "";
  position: absolute;
  left: 11px;
  top: 20px;
  bottom: 0;
  border-left: 1px dotted #8a8a8a;
}
.row {
  position: relative;
  height: 20px;
  display: flex;
  align-items: center;
  padding-left: 24px;
  white-space: nowrap;
}
.row::before {
  content: "";
  position: absolute;
  left: 12px;
  width: 12px;
  top: 10px;
  border-top: 1px dotted #8a8a8a;
}
.row-root { padding-left: 4px; }
.row-root::before { display: none; }
.ic-asm { width: 15px; height: 15px; margin-right: 3px; flex: none; }
.ic { width: 14px; height: 14px; flex: none; margin-top: 2px; }
.mk { width: 7px; height: 9px; margin: -7px 0 0 4px; flex: none; }
.mk2 { width: 8px; height: 10px; margin: -7px 1px 0 4px; flex: none; }
.nomark { margin-left: 4px; }
.plus {
  position: absolute;
  left: 7px;
  top: 6px;
  z-index: 1;
  width: 9px;
  height: 9px;
  border: 1px solid #9a9a9a;
  background:
    linear-gradient(#444, #444) center / 5px 1px no-repeat,
    linear-gradient(#444, #444) center / 1px 5px no-repeat,
    #fff;
}
.scrollbar {
  position: relative;
  width: 15px;
  flex: none;
  margin-right: 2px;
  padding-top: 18px;
}
.sb-up {
  position: absolute;
  left: 4px;
  top: 8px;
  border: 4px solid transparent;
  border-bottom: 4px solid #555;
  border-top: 0;
}
.sb-thumb {
  height: 260px;
  border: 1px solid #9a9da2;
  border-radius: 2px;
  background: linear-gradient(90deg, #f2f2f2, #dcdcdc 50%, #b8b8b8);
  display: flex;
  align-items: center;
  justify-content: center;
}
.sb-grip {
  width: 7px;
  height: 7px;
  background: repeating-linear-gradient(#666 0, #666 1px, transparent 1px, transparent 3px);
}

.sash {
  position: relative;
  width: 13px;
  flex: none;
  background: linear-gradient(90deg, #fff 0, #e2e2e6 30%, #c8ccd4 35%, #f2f3f6 45%, #d8dae0 70%, #a9a9a9 100%);
}
.sash-tri { position: absolute; border: 4px solid transparent; }
.sash-left { left: 1px; top: 267px; border-right: 4px solid #111; border-left: 0; }
.sash-right { left: 8px; top: 316px; border-left: 4px solid #111; border-right: 0; }

.canvas {
  flex: 1;
  min-width: 0;
  margin-top: 2px;
  background: linear-gradient(#a6a194 0, #b6b2a6 30%, #cac7bc 65%, #d9d7cf 100%);
}
.scene { display: block; width: 891px; height: 534px; }

.featurebar {
  width: 64px;
  flex: none;
  display: flex;
  overflow: hidden;
  background: #dde1f2;
}
.fb-col { display: flex; flex-direction: column; padding-top: 7px; }
.fb-col-1 { width: 27px; background: linear-gradient(90deg, #fff 0, #f4f6fb 40%, #dde1f2 100%); }
.fb-col-2 { width: 37px; padding-left: 16px; }
.fb {
  position: relative;
  width: 26px;
  height: 28px;
  flex: none;
  display: flex;
  align-items: center;
  justify-content: center;
}
.fb svg { width: 24px; height: 24px; flex: none; }
.fb-col-1 .fb { width: 27px; }
.fb-flyout::before {
  content: "";
  position: absolute;
  left: -10px;
  top: 10px;
  border: 3px solid transparent;
  border-left: 4px solid #222;
  border-right: 0;
}
.fb-sep {
  height: 8px;
  flex: none;
  background: radial-gradient(circle, #a4a8b2 .8px, transparent 1px) left center / 4px 8px repeat-x;
}

/* floating widgets */
.meter { position: absolute; left: 1012px; top: 86px; width: 119px; height: 60px; }
.meter-dial {
  position: absolute;
  left: 0;
  top: 0;
  z-index: 1;
  width: 60px;
  height: 60px;
  border-radius: 50%;
  background: #3c3d3f;
  display: flex;
  align-items: center;
  justify-content: center;
  box-shadow: 0 0 4px rgba(0,0,0,.5);
}
.meter-dial::before {
  content: "";
  position: absolute;
  inset: 3px;
  border-radius: 50%;
  background: conic-gradient(#4caa58 0 22%, #a8c458 30%, #d8c850 48%, #d68a3a 68%, #c87a30 71%, #3c3d3f 72% 100%);
}
.meter-dial::after {
  content: "";
  position: absolute;
  inset: 5px;
  border-radius: 50%;
  background: #3c3d3f;
}
.meter-num {
  position: relative;
  z-index: 1;
  font-family: Inter, Lato, sans-serif;
  font-weight: 200;
  font-size: 31px;
  letter-spacing: -2px;
  color: #eee;
}
.meter-pct { position: relative; z-index: 1; font-size: 11px; font-weight: 700; color: #e8e8e8; margin: 12px 0 0 2px; }
.meter-rates {
  position: absolute;
  left: 29px;
  top: 10px;
  width: 90px;
  height: 42px;
  padding-left: 32px;
  border-radius: 0 21px 21px 0;
  background: #3e3f42;
  display: flex;
  flex-direction: column;
  justify-content: center;
  gap: 7px;
}
.rate { display: flex; align-items: center; color: #e4e4e4; height: 14px; line-height: 14px; }
.rate svg { width: 8px; height: 8px; margin-right: 11px; flex: none; }
.rate-up { fill: #d89a48; }
.rate-down { fill: #4faa5a; }
.rate b { font-weight: 400; font-size: 11.500px; }
.rate small { font-size: 9.500px; color: #9a9a9a; }

.speed-pill {
  position: absolute;
  left: 1125px;
  top: 609px;
  width: 80px;
  height: 21px;
  display: flex;
  align-items: center;
  padding-left: 10px;
  color: #e8f0fc;
  font-size: 12px;
  border-radius: 7px 0 0 7px;
  background: linear-gradient(#5b8fe0, #3f78d6);
  box-shadow: 0 0 2px #a8c0e8;
}
.speed-pill svg { width: 12px; height: 12px; margin-right: 16px; fill: #a8f070; flex: none; }

.logo {
  position: absolute;
  left: 1073px;
  top: 684px;
  height: 40px;
  display: flex;
  align-items: flex-end;
  white-space: nowrap;
  font-family: "Noto Sans CJK SC", sans-serif;
  font-weight: 900;
}
.logo::before {
  content: "";
  position: absolute;
  left: 24px;
  top: 1px;
  width: 20px;
  height: 8px;
  background: #d89a28;
  clip-path: polygon(0 100%, 60% 0, 100% 100%);
}
.logo-a {
  font-size: 27px;
  line-height: 38px;
  letter-spacing: -2px;
  color: #d8981a;
  text-shadow: 1px 0 0 #2a1806, -1px 0 0 #2a1806, 0 1px 0 #2a1806, 0 -1px 0 #2a1806, 1px 2px 0 #7a4a10;
}
.logo-b {
  font-size: 23px;
  line-height: 29px;
  margin-left: 1px;
  letter-spacing: 1px;
  font-style: italic;
  color: #f6c83c;
  text-shadow: 1px 0 0 #c81818, -1px 0 0 #c81818, 0 1px 0 #c81818, 0 -1px 0 #c81818, 2px 2px 0 #301008;
}
```
